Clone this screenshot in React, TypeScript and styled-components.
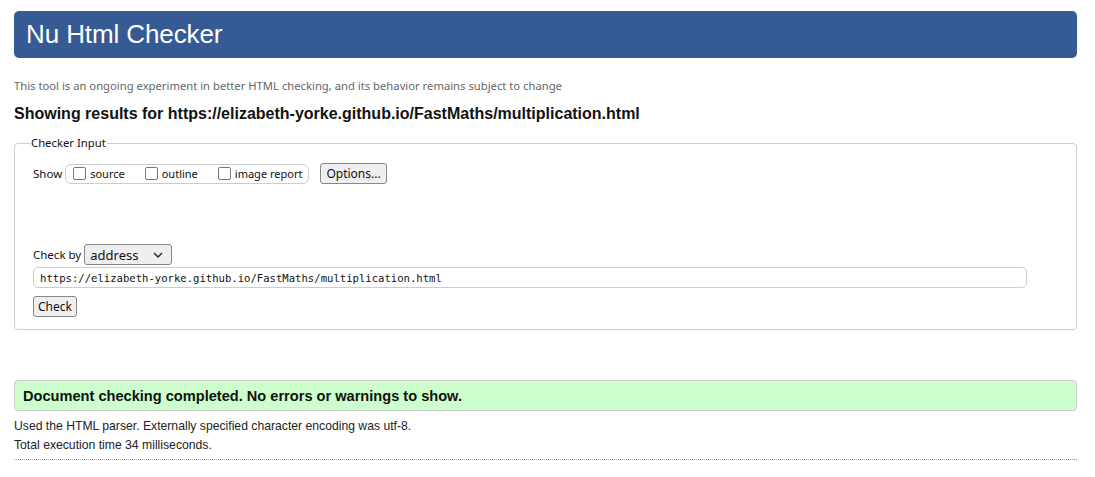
import React from 'react';
import styled, { createGlobalStyle } from 'styled-components';

const GlobalStyle = createGlobalStyle`
  html, body {
    margin: 0;
    padding: 0;
    background: #fff;
  }
  body {
    font-family: "Liberation Sans", Arial, sans-serif;
    color: #111;
  }
`;

const url = 'https://elizabeth-yorke.github.io/FastMaths/multiplication.html';

const App = () => {
  return (
    <>
      <GlobalStyle />
      <Page>
        <Banner>
          <Title>Nu Html Checker</Title>
        </Banner>
        <Tagline>
          This tool is an ongoing experiment in better HTML checking, and its behavior remains subject to change
        </Tagline>
        <Results>Showing results for {url}</Results>

        <Fieldset>
          <Legend>Checker Input</Legend>
          <Row>
            <Label>Show</Label>
            <Group>
              <Check>
                <Box />
                source
              </Check>
              <Check>
                <Box />
                outline
              </Check>
              <Check>
                <Box />
                image report
              </Check>
            </Group>
            <Button>Options...</Button>
          </Row>

          <CheckByRow>
            <Label>Check by</Label>
            <Select>
              <span>address</span>
              <svg width="10" height="6" viewBox="0 0 10 6">
                <path d="M1 1l4 4 4-4" fill="none" stroke="#222" strokeWidth="1.4" />
              </svg>
            </Select>
          </CheckByRow>
          <UrlInput>{url}</UrlInput>
          <Button $small>Check</Button>
        </Fieldset>

        <Success>Document checking completed. No errors or warnings to show.</Success>
        <Notes>
          <Note>Used the HTML parser. Externally specified character encoding was utf-8.</Note>
          <Note>Total execution time 34 milliseconds.</Note>
        </Notes>
        <Rule />
      </Page>
    </>
  );
};
export default App;

const Page = styled.div`
  padding: 11px 18px 0 14px;
`;

const Banner = styled.div`
  background: #365b94;
  border-radius: 5px;
  height: 47px;
  display: flex;
  align-items: center;
  padding-left: 12px;
`;

const Title = styled.h1`
  margin: 0;
  font-size: 26px;
  font-weight: normal;
  color: #fff;
  letter-spacing: -0.1px;
`;

const Tagline = styled.p`
  margin: 20px 0 0;
  font-family: "Noto Sans", "Open Sans", sans-serif;
  font-size: 11.25px;
  color: #666;
  line-height: 16px;
`;

const Results = styled.h2`
  margin: 10px 0 0;
  font-size: 16px;
  font-weight: bold;
  line-height: 20px;
`;

const Fieldset = styled.fieldset`
  margin: 11px 0 0;
  padding: 12px 18px 12px;
  border: 1px solid #ccc;
  border-radius: 4px;
  font-family: "Noto Sans", "Open Sans", sans-serif;
  font-size: 12px;
`;

const Legend = styled.legend`
  padding: 0 1px;
  margin-left: -3px;
  font-size: 11.3px;
  line-height: 16px;
  color: #111;
`;

const Row = styled.div`
  display: flex;
  align-items: center;
  height: 21px;
`;

const Label = styled.span`
  font-size: 11.5px;
  margin-right: 3px;
`;

const Group = styled.div`
  display: flex;
  align-items: center;
  gap: 20px;
  height: 18px;
  border: 1px solid #ccc;
  border-radius: 6px;
  padding: 0 6px 0 7px;
  margin-right: 11px;
`;

const Check = styled.label`
  display: flex;
  align-items: center;
  gap: 4px;
  font-size: 11px;
`;

const Box = styled.span`
  width: 11px;
  height: 11px;
  border: 1px solid #777;
  border-radius: 2px;
  background: #fff;
`;

const Button = styled.button<{ $small?: boolean }>`
  display: block;
  font-family: "Noto Sans", "Open Sans", sans-serif;
  font-size: 12px;
  color: #111;
  background: #efeff2;
  border: 1px solid #888;
  border-radius: 3px;
  height: 21px;
  padding: ${({ $small }) => ($small ? '0 4px' : '0 5px')};
  line-height: 18px;
  margin-top: ${({ $small }) => ($small ? '8px' : '0')};
`;

const CheckByRow = styled.div`
  display: flex;
  align-items: center;
  height: 21px;
  margin-top: 60px;
`;

const Select = styled.div`
  width: 88px;
  height: 21px;
  box-sizing: border-box;
  border: 1px solid #888;
  border-radius: 3px;
  background: #efeff2;
  display: flex;
  align-items: center;
  justify-content: space-between;
  padding: 0 8px 0 5px;
  font-size: 13px;
`;

const UrlInput = styled.div`
  margin-top: 2px;
  width: 994px;
  height: 21px;
  box-sizing: border-box;
  border: 1px solid #ccc;
  border-radius: 5px;
  padding: 0 6px;
  display: flex;
  align-items: center;
  font-family: "DejaVu Sans Mono", "Liberation Mono", monospace;
  font-size: 10.6px;
`;

const Success = styled.div`
  margin-top: 50px;
  height: 31px;
  box-sizing: border-box;
  background: #ccffcc;
  border: 1px solid #ccc;
  border-radius: 4px;
  padding-left: 8px;
  display: flex;
  align-items: center;
  font-size: 14.6px;
  font-weight: bold;
`;

const Notes = styled.div`
  margin-top: 6px;
`;

const Note = styled.p`
  margin: 0;
  font-size: 12.2px;
  line-height: 19px;
  color: #222;
`;

const Rule = styled.hr`
  margin: 4px 0 0;
  border: 0;
  border-top: 1px dotted #999;
`;
